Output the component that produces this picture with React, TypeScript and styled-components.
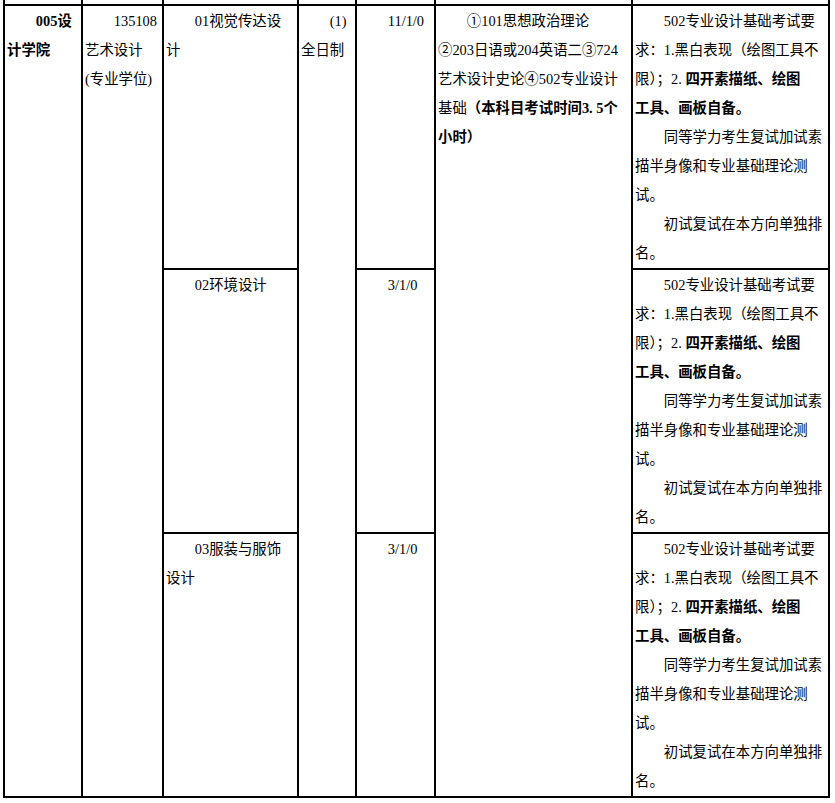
import React from 'react';
import styled, { createGlobalStyle } from 'styled-components';

const GlobalStyle = createGlobalStyle`
  html, body {
    margin: 0;
    padding: 0;
    background: #ffffff;
  }
  body {
    font-family: "Liberation Serif", "Noto Sans CJK SC", serif;
    color: #000000;
  }
`;

const Page = styled.div`
  width: 835px;
  height: 803px;
  overflow: hidden;
`;

const Table = styled.table`
  border-collapse: collapse;
  table-layout: fixed;
  width: 827px;
  margin: 0 0 0 3px;
  font-size: 14.4px;
  line-height: 29px;
`;

const Col = styled.col<{ $w: number }>`
  width: ${({ $w }) => $w}px;
`;

const Cell = styled.td`
  border: 2px solid #000000;
  vertical-align: top;
  text-align: left;
  padding: 1px 2px 0;
  white-space: nowrap;
  overflow: hidden;
`;

const SpacerCell = styled.td`
  border: 2px solid #000000;
  border-top: none;
  height: 4px;
  padding: 0;
  font-size: 0;
  line-height: 0;
`;

const Para = styled.p<{ $bold?: boolean }>`
  margin: 0;
  text-indent: 2em;
  font-weight: ${({ $bold }) => ($bold ? 700 : 400)};
`;

const Strong = styled.b`
  font-weight: 700;
`;

const widths = [78, 81, 135, 58, 79, 197, 197];

const Notes: React.FC = () => (
  <>
    <Para>
      502专业设计基础考试要
      <br />
      求：1.黑白表现（绘图工具不
      <br />
      限）；2. <Strong>四开素描纸、绘图</Strong>
      <br />
      <Strong>工具、画板自备。</Strong>
    </Para>
    <Para>
      同等学力考生复试加试素
      <br />
      描半身像和专业基础理论测
      <br />
      试。
    </Para>
    <Para>
      初试复试在本方向单独排
      <br />
      名。
    </Para>
  </>
);

const directions = [
  { name: ['01视觉传达设', '计'], plan: '11/1/0' },
  { name: ['02环境设计'], plan: '3/1/0' },
  { name: ['03服装与服饰', '设计'], plan: '3/1/0' },
];

const DirectionName: React.FC<{ lines: string[] }> = ({ lines }) => (
  <Para>
    {lines.map((line, i) => (
      <React.Fragment key={i}>
        {i > 0 && <br />}
        {line}
      </React.Fragment>
    ))}
  </Para>
);

const App: React.FC = () => {
  return (
    <Page>
      <GlobalStyle />
      <Table>
        <colgroup>
          {widths.map((w, i) => (
            <Col key={i} $w={w} />
          ))}
        </colgroup>
        <tbody>
          <tr>
            {widths.map((_, i) => (
              <SpacerCell key={i} />
            ))}
          </tr>
          {directions.map((d, idx) => (
            <tr key={idx}>
              {idx === 0 && (
                <>
                  <Cell rowSpan={3}>
                    <Para $bold>
                      005设
                      <br />
                      计学院
                    </Para>
                  </Cell>
                  <Cell rowSpan={3}>
                    <Para>
                      135108
                      <br />
                      艺术设计
                      <br />
                      (专业学位)
                    </Para>
                  </Cell>
                </>
              )}
              <Cell>
                <DirectionName lines={d.name} />
              </Cell>
              {idx === 0 && (
                <Cell rowSpan={3}>
                  <Para>
                    (1)
                    <br />
                    全日制
                  </Para>
                </Cell>
              )}
              <Cell>
                <Para>{d.plan}</Para>
              </Cell>
              {idx === 0 && (
                <Cell rowSpan={3}>
                  <Para>
                    ①101思想政治理论
                    <br />
                    ②203日语或204英语二③724
                    <br />
                    艺术设计史论④502专业设计
                    <br />
                    基础<Strong>（本科目考试时间3. 5个</Strong>
                    <br />
                    <Strong>小时）</Strong>
                  </Para>
                </Cell>
              )}
              <Cell>
                <Notes />
              </Cell>
            </tr>
          ))}
        </tbody>
      </Table>
    </Page>
  );
};

export default App;
